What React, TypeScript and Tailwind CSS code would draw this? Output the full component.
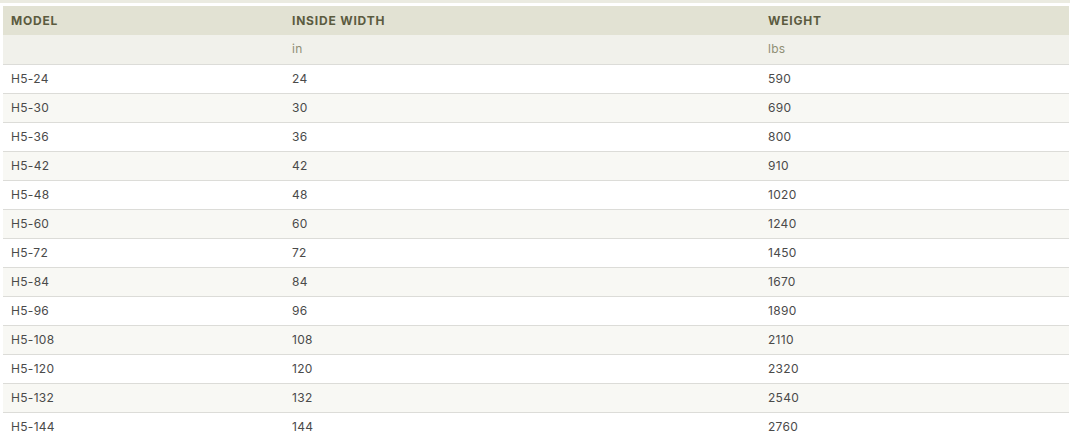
import React from "react";

const rows: [string, string, string][] = [
  ["H5-24", "24", "590"],
  ["H5-30", "30", "690"],
  ["H5-36", "36", "800"],
  ["H5-42", "42", "910"],
  ["H5-48", "48", "1020"],
  ["H5-60", "60", "1240"],
  ["H5-72", "72", "1450"],
  ["H5-84", "84", "1670"],
  ["H5-96", "96", "1890"],
  ["H5-108", "108", "2110"],
  ["H5-120", "120", "2320"],
  ["H5-132", "132", "2540"],
  ["H5-144", "144", "2760"],
];

export default function App() {
  return (
    <div className="w-[1072px] h-[441px] overflow-hidden bg-white" style={{ fontFamily: "Inter, 'Open Sans', sans-serif" }}>
      <div className="h-[3px] w-[1070px] bg-[#ebebe1]" />
      <div className="pt-[3px] pl-[3px]">
        <table className="w-[1066px] border-collapse table-fixed">
          <colgroup>
            <col className="w-[281px]" />
            <col className="w-[476px]" />
            <col className="w-[309px]" />
          </colgroup>
          <thead>
            <tr className="h-[29px] bg-[#e2e2d3] text-[12px] font-bold tracking-[0.8px] text-[#5b5b3f]">
              <th className="text-left pl-2 font-bold">MODEL</th>
              <th className="text-left pl-2 font-bold">INSIDE WIDTH</th>
              <th className="text-left pl-2 font-bold">WEIGHT</th>
            </tr>
            <tr className="h-[29px] bg-[#f1f1eb] text-[12px] tracking-[0.3px] text-[#8f8f75] border-b border-[#dcdcd8]">
              <th className="text-left pl-2 font-normal"></th>
              <th className="text-left pl-2 font-normal">in</th>
              <th className="text-left pl-2 font-normal">lbs</th>
            </tr>
          </thead>
          <tbody>
            {rows.map((r, i) => (
              <tr
                key={r[0]}
                className={`h-[29px] text-[12px] tracking-[0.3px] text-[#4a4a4a] border-b border-[#dcdcd8] ${i % 2 === 0 ? "bg-white" : "bg-[#f8f8f4]"}`}
              >
                <td className="pl-2">{r[0]}</td>
                <td className="pl-2">{r[1]}</td>
                <td className="pl-2">{r[2]}</td>
              </tr>
            ))}
          </tbody>
        </table>
      </div>
    </div>
  );
}
